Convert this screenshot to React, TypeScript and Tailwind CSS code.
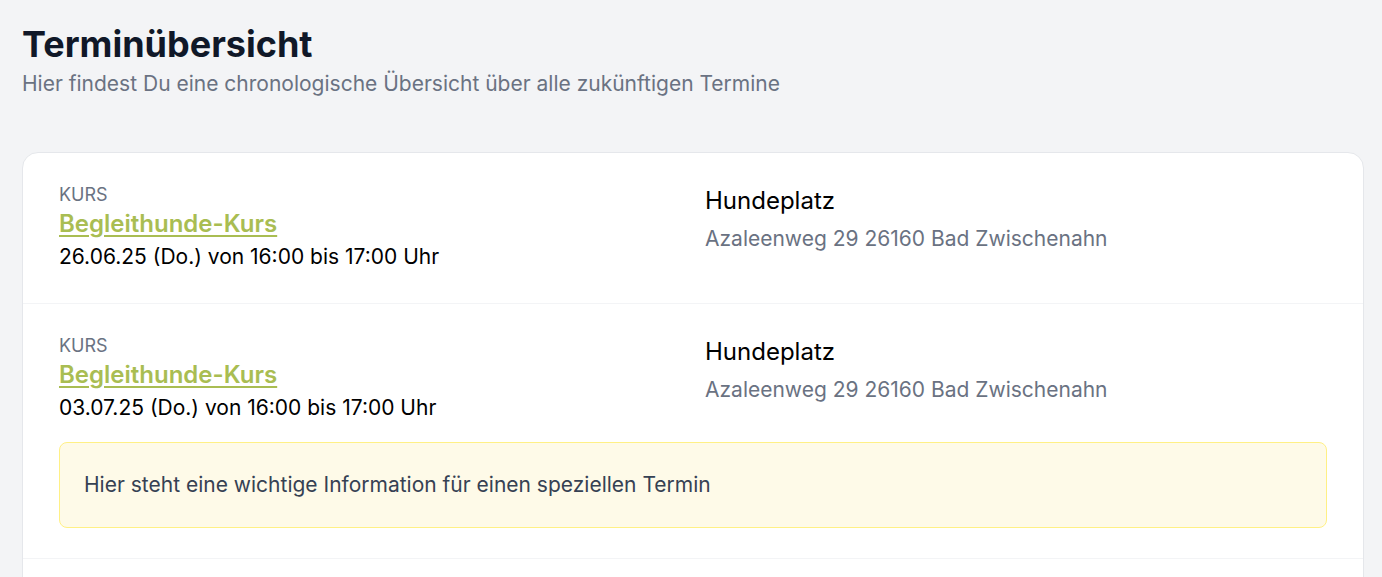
import React from "react";

type Item = { date: string; info?: string };

const items: Item[] = [
  { date: "26.06.25 (Do.) von 16:00 bis 17:00 Uhr" },
  {
    date: "03.07.25 (Do.) von 16:00 bis 17:00 Uhr",
    info: "Hier steht eine wichtige Information für einen speziellen Termin",
  },
  { date: "10.07.25 (Do.) von 16:00 bis 17:00 Uhr" },
];

function Row({ item }: { item: Item }) {
  return (
    <div className={`border-b border-gray-100 px-9 pt-8 ${item.info ? "pb-[30px]" : "pb-8"}`}>
      <div className="grid grid-cols-2 gap-6">
        <div className="flex flex-col">
          <span className="text-lg leading-5 text-gray-500">KURS</span>
          <a
            href="#"
            className="text-2xl leading-[38px] font-semibold text-[#a9bd52] underline decoration-2 underline-offset-[3px]"
          >
            Begleithunde-Kurs
          </a>
          <span className="text-[21px] leading-7 text-black">{item.date}</span>
        </div>
        <div className="flex flex-col">
          <span className="text-2xl leading-8 text-black">Hundeplatz</span>
          <span className="mt-2 text-[21px] leading-7 text-gray-500">
            Azaleenweg 29 26160 Bad Zwischenahn
          </span>
        </div>
      </div>
      {item.info && (
        <div className="mt-5 rounded-lg border border-yellow-200 bg-[#fefae8] px-6 py-7 text-[21px] leading-7 text-gray-700">
          {item.info}
        </div>
      )}
    </div>
  );
}

export default function App() {
  return (
    <div
      className="min-h-screen bg-gray-100 pl-[22px] pr-[18px] pt-6"
      style={{ fontFamily: "Inter, 'Noto Sans', sans-serif" }}
    >
      <h1 className="text-4xl leading-10 font-bold text-gray-900">Terminübersicht</h1>
      <p className="mt-[6px] text-[21px] leading-7 text-gray-500">
        Hier findest Du eine chronologische Übersicht über alle zukünftigen Termine
      </p>
      <div className="mt-[54px] overflow-hidden rounded-2xl border border-gray-200 bg-white">
        {items.map((it, i) => (
          <Row key={i} item={it} />
        ))}
      </div>
    </div>
  );
}
